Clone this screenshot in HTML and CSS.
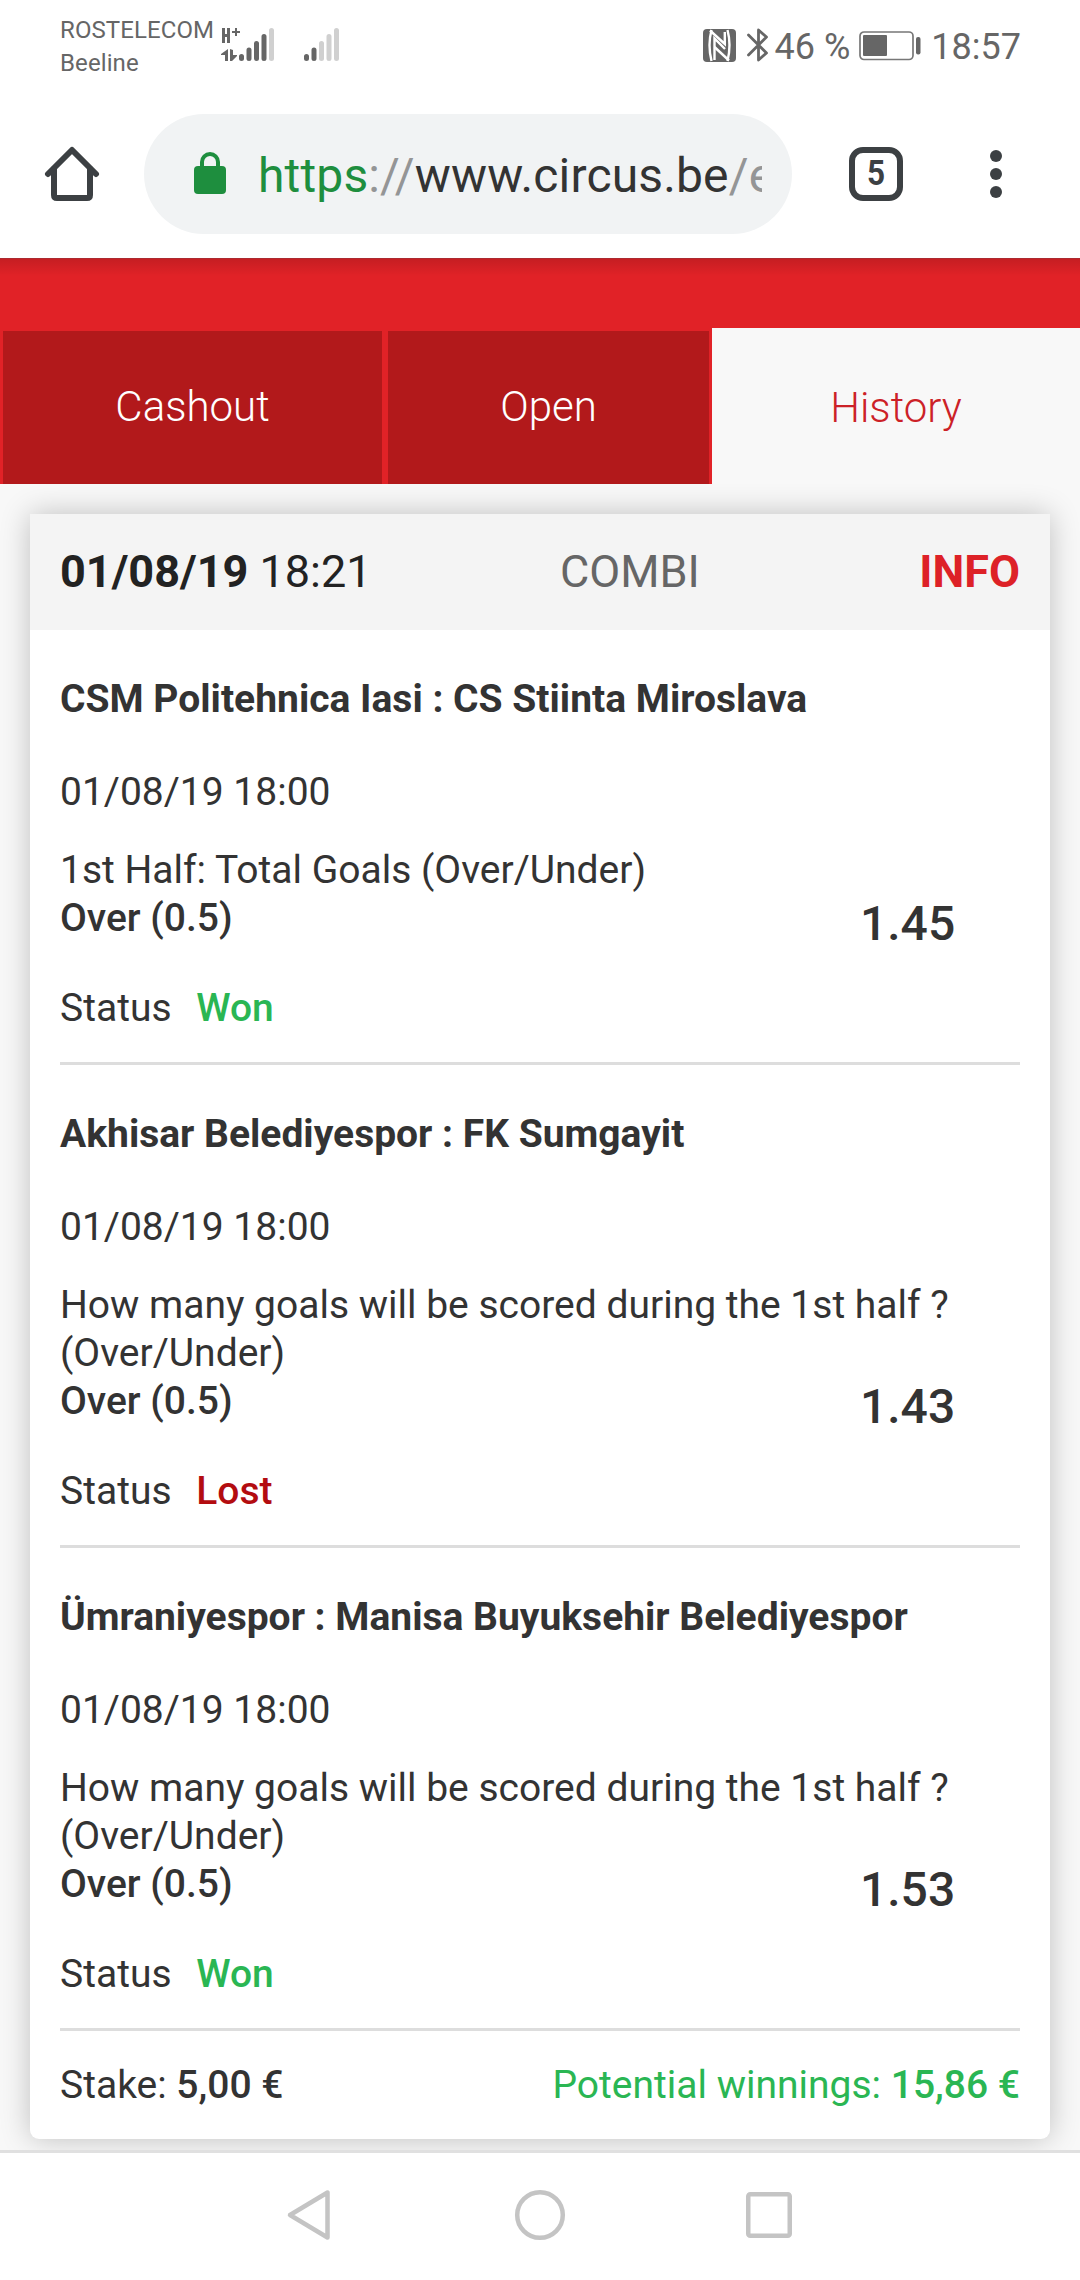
FILE: index.html
```html
<!DOCTYPE html>
<html lang="en">
<head>
<meta charset="utf-8">
<title>Bet history</title>
<link rel="stylesheet" href="styles.css">
</head>
<body>
<div class="screen">
  <header class="status-bar">
    <div class="carriers"><span>ROSTELECOM</span><span>Beeline</span></div>
    <svg class="signals" width="120" height="36" viewBox="220 27 120 36">
      <g fill="#666">
        <path d="M222 28h3v6h2v-6h3v15h-3v-6h-2v6h-3zM235 28h2v3h3v2h-3v3h-2v-3h-3v-2h3z"/>
        <path d="M228 49v12h-3v-6h-4v-1zM230 49l3 1v5h4v1l-5 5h-2z"/>
      </g>
      <g stroke-width="5" stroke-linecap="round">
        <path stroke="#666" d="M241.500 56.500v2M249 50v8.500M256.500 43.500v15M264 36.500v22M306.500 56.500v2M314 50v8.500"/>
        <path stroke="#d0d0d0" d="M271.500 30.500v28M321.500 43.500v15M329 36.500v22M336.500 30.500v28"/>
      </g>
    </svg>
    <div class="indicators">
      <svg class="nfc" width="33" height="33" viewBox="0 0 33 33">
        <rect width="33" height="33" rx="4" fill="#666"/>
        <g fill="none" stroke="#fff" stroke-width="2.400">
          <path d="M8.500 1Q4.500 16 8.500 32M24.500 1q4 15 0 31"/>
          <path d="M7 1.500 21.800 15V3M26 31.500 11.500 18"/>
          <path d="M11.500 31V9.500L22 20"/>
        </g>
      </svg>
      <svg class="bluetooth" width="22" height="36" viewBox="0 0 22 36"><path d="M1.500 8l18 18-8 7V3l8 7-18 18" fill="none" stroke="#666" stroke-width="2.800" stroke-linejoin="round" stroke-linecap="round"/></svg>
      <span class="percent">46 %</span>
      <svg class="battery" width="62" height="30" viewBox="0 0 62 30">
        <rect x="1" y="1" width="53" height="27.500" rx="4" fill="none" stroke="#777" stroke-width="1.700"/>
        <rect x="4" y="4" width="24" height="21" rx="1" fill="#666"/>
        <rect x="57" y="6" width="4.500" height="17.500" rx="2" fill="#666"/>
      </svg>
      <span class="clock">18:57</span>
    </div>
  </header>

  <div class="browser-bar">
    <svg class="home" width="56" height="56" viewBox="0 0 56 56"><g fill="none" stroke="#3c4043" stroke-width="6" stroke-linecap="round" stroke-linejoin="round"><path d="M4 28 28 4l24 24"/><path d="M10 23v26q0 3 3 3h30q3 0 3-3V23" /></g></svg>
    <div class="address">
      <svg class="lock" width="32" height="42" viewBox="0 0 32 42"><rect y="14" width="32" height="28" rx="4" fill="#1e8e3e"/><path d="M8 16V10a8 8 0 0 1 16 0v6" fill="none" stroke="#1e8e3e" stroke-width="4"/></svg>
      <div class="url"><span class="scheme">https</span><span class="faint">://</span>www.circus.be<span class="faint">/e</span></div>
    </div>
    <div class="tab-count"><span>5</span></div>
    <svg class="menu" width="12" height="48" viewBox="0 0 12 48" fill="#3c4043"><circle cx="6" cy="6" r="6"/><circle cx="6" cy="24" r="6"/><circle cx="6" cy="42" r="6"/></svg>
  </div>

  <main class="page">
    <nav class="tabs">
      <a class="tab tab-cashout">Cashout</a>
      <a class="tab tab-open">Open</a>
      <a class="tab tab-active">History</a>
    </nav>
    <article class="ticket">
      <header class="ticket-head">
        <span class="placed"><b>01/08/19</b> 18:21</span>
        <span class="kind">COMBI</span>
        <b class="info">INFO</b>
      </header>
      <section class="bet">
        <h2 class="teams">CSM Politehnica Iasi : CS Stiinta Miroslava</h2>
        <div class="date">01/08/19 18:00</div>
        <div class="market">
          <div class="pick">1st Half: Total Goals (Over/Under)<br><strong>Over (0.5)</strong></div>
          <div class="odds">1.45</div>
        </div>
        <div class="status">Status <strong class="won">Won</strong></div>
      </section>
      <section class="bet">
        <h2 class="teams">Akhisar Belediyespor : FK Sumgayit</h2>
        <div class="date">01/08/19 18:00</div>
        <div class="market">
          <div class="pick">How many goals will be scored during the 1st half ?<br>(Over/Under)<br><strong>Over (0.5)</strong></div>
          <div class="odds">1.43</div>
        </div>
        <div class="status">Status <strong class="lost">Lost</strong></div>
      </section>
      <section class="bet">
        <h2 class="teams">Ümraniyespor : Manisa Buyuksehir Belediyespor</h2>
        <div class="date">01/08/19 18:00</div>
        <div class="market">
          <div class="pick">How many goals will be scored during the 1st half ?<br>(Over/Under)<br><strong>Over (0.5)</strong></div>
          <div class="odds">1.53</div>
        </div>
        <div class="status">Status <strong class="won">Won</strong></div>
      </section>
      <footer class="totals">
        <span>Stake: <strong>5,00 €</strong></span>
        <span class="winnings">Potential winnings: <strong>15,86 €</strong></span>
      </footer>
    </article>
  </main>

  <nav class="system-nav">
    <svg class="key-back" width="44" height="52" viewBox="0 0 44 52"><path d="M41.500 3.500v45L4 26z" fill="none" stroke="#c4c4c4" stroke-width="4.500" stroke-linejoin="round"/></svg>
    <svg class="key-home" width="52" height="52" viewBox="0 0 52 52"><circle cx="26" cy="26" r="22.800" fill="none" stroke="#c4c4c4" stroke-width="4.500"/></svg>
    <svg class="key-recent" width="46" height="46" viewBox="0 0 46 46"><rect x="2.250" y="2.250" width="41.500" height="41.500" rx="2" fill="none" stroke="#c4c4c4" stroke-width="4.500"/></svg>
  </nav>
</div>
</body>
</html>
```
FILE: styles.css
```css
* { box-sizing: border-box; }

body {
  margin: 0;
  font-family: Roboto, "Liberation Sans", sans-serif;
  color: #333;
}

svg { display: block; flex: none; }

.screen {
  display: flex;
  flex-direction: column;
  width: 1080px;
  height: 2280px;
  overflow: hidden;
  background: #fff;
}

/* Phone status bar */
.status-bar {
  display: flex;
  align-items: flex-start;
  height: 90px;
  padding-left: 60px;
  padding-right: 59px;
  color: #666;
}

.carriers {
  display: flex;
  flex-direction: column;
  width: 160px;
  padding-top: 14px;
  font-size: 24px;
  line-height: 32.500px;
  letter-spacing: 0.1px;
}

.signals { margin-top: 27px; }

.indicators {
  display: flex;
  margin-left: auto;
  font-size: 36px;
  line-height: 46px;
}

.nfc { margin-top: 29px; }
.bluetooth { margin: 27px 6px 0 11px; }
.percent { margin-top: 24px; }
.battery { margin: 31px 10px 0 9px; }
.clock { margin-top: 24px; }

/* Browser toolbar */
.browser-bar {
  display: flex;
  align-items: flex-start;
  height: 168px;
  padding: 24px 78px 0 44px;
}

.home { margin-top: 32px; }

.address {
  display: flex;
  width: 648px;
  height: 120px;
  margin-left: 44px;
  padding: 0 30px 0 50px;
  border-radius: 60px;
  background: #f1f3f4;
}

.lock { margin-top: 38px; }

.url {
  flex: 1;
  margin-left: 32px;
  overflow: hidden;
  white-space: nowrap;
  font-size: 48px;
  line-height: 123px;
  letter-spacing: 0.15px;
}

.scheme { color: #1e8e3e; }
.faint { color: #949596; }

.tab-count {
  width: 54px;
  height: 54px;
  margin: 33px 0 0 57px;
  border: 6px solid #3c4043;
  border-radius: 14px;
  color: #3c4043;
  font-size: 35px;
  font-weight: 700;
  line-height: 42px;
  text-align: center;
}

.tab-count span { display: inline-block; transform: scaleX(0.9); }
.menu { margin: 36px 0 0 auto; }

/* Web page */
.page {
  height: 1892px;
  overflow: hidden;
  background:
    linear-gradient(#ac2a30, #ac2a30) 0 0 / 100% 1px no-repeat,
    linear-gradient(rgba(0, 0, 0, 0.13), rgba(0, 0, 0, 0)) 0 0 / 100% 18px no-repeat,
    linear-gradient(#e12227, #e12227) 0 0 / 100% 226px no-repeat,
    #f8f8f8;
}

.tabs {
  display: flex;
  height: 226px;
  padding-top: 70px;
}

.tab {
  font-size: 42px;
  font-weight: 300;
  line-height: 151px;
  text-align: center;
  color: #fff;
  border: 3px solid #e12227;
  border-bottom: 0;
  background: #b2191b;
}

.tab-cashout { width: 385px; }
.tab-open { width: 327px; }
.tab-active {
  flex: 1;
  border: 0;
  line-height: 159px;
  color: #cc2127;
  background: #f8f8f8;
}

.ticket {
  margin: 30px 30px 0;
  border-radius: 0 0 9px 9px;
  background: #fff;
  box-shadow: 0 0 30px rgba(0, 0, 0, 0.23);
  font-size: 39px;
  line-height: 48px;
}

.ticket-head {
  display: grid;
  grid-template-columns: 400px 1fr 300px;
  padding: 0 30px;
  background: #f4f4f4;
  color: #222;
  font-size: 45px;
  line-height: 115px;
  height: 116px;
}

.kind {
  margin-left: 100px;
  color: #666;
}

.info {
  color: #dd2127;
  text-align: right;
}

.bet {
  margin: 0 30px;
  padding: 45px 0 30px;
  border-bottom: 3px solid #ddd;
}

.teams {
  margin: 0 0 45px;
  font-size: inherit;
  font-weight: 700;
}

.date { margin-bottom: 30px; }

.market {
  display: flex;
  justify-content: space-between;
  align-items: flex-end;
  margin-bottom: 42px;
}

.pick { flex: none; }

/* The odds column reaches under the end of a long question line */
.odds {
  flex: none;
  width: 96px;
  margin: 0 64px -6px -150px;
  font-size: 48px;
  font-weight: 500;
}

strong { font-weight: 500; }
.status strong { margin-left: 15px; }
.won, .winnings { color: #2ab653; }
.lost { color: #b30c10; }

.totals {
  display: flex;
  justify-content: space-between;
  padding: 30px;
}

/* Android navigation keys */
.system-nav {
  display: flex;
  align-items: center;
  flex: 1;
  padding: 0 0 3px 286px;
  border-top: 3px solid #e0e0e0;
}

.key-home { margin: 0 180px 0 184px; }
```
